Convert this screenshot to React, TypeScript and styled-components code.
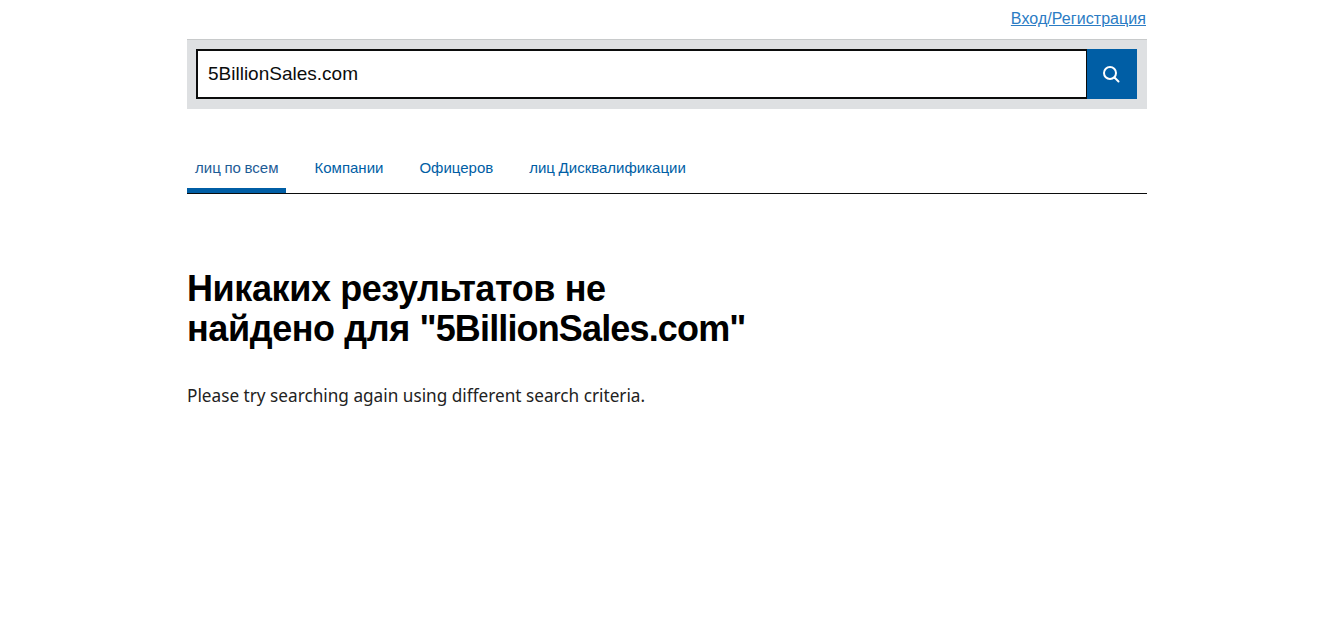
import React from 'react';
import styled, { createGlobalStyle } from 'styled-components';

const GlobalStyle = createGlobalStyle`
  html, body {
    margin: 0;
    padding: 0;
    background: #fff;
    font-family: "Liberation Sans", Arial, sans-serif;
  }
`;

const Page = styled.div`
  width: 960px;
  margin: 0 auto;
`;

const TopBar = styled.div`
  display: flex;
  justify-content: flex-end;
  height: 39px;
  padding-top: 10px;
  box-sizing: border-box;
`;

const SignIn = styled.a`
  margin-right: 1px;
  font-size: 16px;
  line-height: 18px;
  letter-spacing: 0.06px;
  color: #2b7cc4;
  text-decoration: underline;
`;

const SearchBar = styled.form`
  display: flex;
  height: 70px;
  box-sizing: border-box;
  padding: 9px 10px 10px 9px;
  background: #dee0e2;
  border-top: 1px solid #c8cacb;
`;

const SearchInput = styled.div`
  flex: 1;
  box-sizing: border-box;
  height: 50px;
  padding: 0 10px;
  border: 2px solid #0b0c0c;
  border-right-width: 1px;
  background: #fff;
  font-size: 19px;
  line-height: 46px;
  color: #0b0c0c;
`;

const SearchButton = styled.button`
  width: 50px;
  height: 50px;
  padding: 0 2px 0 0;
  border: none;
  background: #005ea5;
  display: flex;
  align-items: center;
  justify-content: center;
`;

const Tabs = styled.nav`
  display: flex;
  height: 85px;
  box-sizing: border-box;
  padding-top: 40px;
  border-bottom: 1px solid #0b0c0c;
`;

const Tab = styled.a<{ $active?: boolean }>`
  display: block;
  height: 44px;
  box-sizing: border-box;
  padding: 9px 8px 0;
  margin-right: 20px;
  font-size: 15px;
  line-height: 20px;
  word-spacing: -0.5px;
  text-decoration: none;
  color: ${p => (p.$active ? '#1d5c96' : '#005ea5')};
  border-bottom: 5px solid ${p => (p.$active ? '#005ea5' : 'transparent')};
`;

const Heading = styled.h1`
  margin: 75px 0 0;
  width: 600px;
  font-family: "Liberation Sans", sans-serif;
  font-size: 36px;
  line-height: 40px;
  font-weight: 700;
  letter-spacing: -0.4px;
  color: #000;
`;

const Query = styled.span`
  letter-spacing: -0.85px;
`;

const Message = styled.p`
  margin: 35px 0 0;
  font-family: "Noto Sans", sans-serif;
  font-size: 17.2px;
  line-height: 24px;
  color: #222;
`;

export default function App() {
  return (
    <>
      <GlobalStyle />
      <Page>
        <TopBar>
          <SignIn href="#">Вход/Регистрация</SignIn>
        </TopBar>
        <SearchBar onSubmit={e => e.preventDefault()}>
          <SearchInput>5BillionSales.com</SearchInput>
          <SearchButton type="submit" aria-label="Search">
            <svg width="17" height="17" viewBox="0 0 17 17" fill="none" stroke="#fff" strokeWidth="2" strokeLinecap="round">
              <circle cx="7" cy="7" r="6" />
              <path d="M11.5 11.5l4 4" />
            </svg>
          </SearchButton>
        </SearchBar>
        <Tabs>
          <Tab $active href="#">лиц по всем</Tab>
          <Tab href="#">Компании</Tab>
          <Tab href="#">Офицеров</Tab>
          <Tab href="#">лиц Дисквалификации</Tab>
        </Tabs>
        <Heading>Никаких результатов не<br />найдено для <Query>"5BillionSales.com"</Query></Heading>
        <Message>Please try searching again using different search criteria.</Message>
      </Page>
    </>
  );
}
